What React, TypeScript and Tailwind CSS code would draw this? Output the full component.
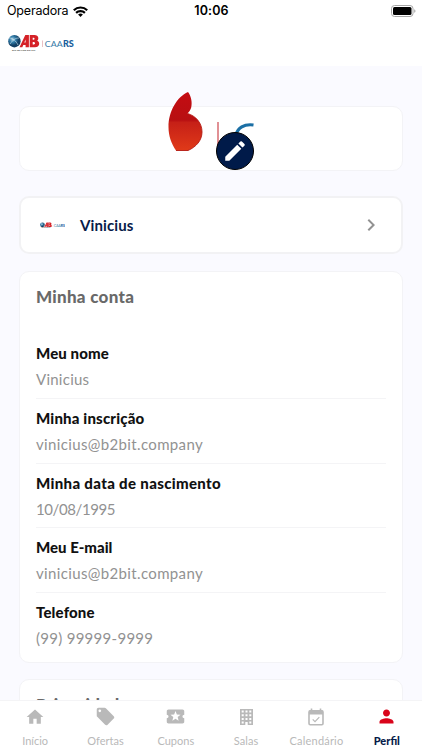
import type { ReactNode } from "react";
import {
  MdChevronRight,
  MdEdit,
  MdHome,
  MdLocalActivity,
  MdLocalOffer,
  MdPerson,
} from "react-icons/md";

function Logo({ className }: { className: string }) {
  return (
    <svg className={className} viewBox="0 0 66 18" aria-label="OAB CAARS">
      <defs>
        <radialGradient id="globe" cx="0.35" cy="0.35">
          <stop offset="0" stopColor="#a9cfe2" />
          <stop offset="0.5" stopColor="#2f7aa6" />
          <stop offset="1" stopColor="#123f63" />
        </radialGradient>
      </defs>
      <circle cx="6.4" cy="7.2" r="6.2" fill="url(#globe)" />
      <path d="M1 4c4 0 7 3 9 7M2 10c3-4 5-6 9-6" stroke="#d7e9f2" strokeWidth="0.6" fill="none" />
      <path fillRule="evenodd" d="M11.5 13.200 17.300 1h3.600v12.200h-3.300v-2.200h-2.300l-1 2.200zM16.300 8.600h1.300V5.500z" fill="#d52127" />
      <path
        fillRule="evenodd"
        d="M21.700 1h4.800c4.500 0 4.600 4.700 2.600 5.700 3.400 1.200 2.700 6.500-2.100 6.500h-5.300zM24.700 3.700v2h.9c1.300 0 1.300-2 0-2zM24.700 8.100v2.400h1.200c1.600 0 1.600-2.400 0-2.400z"
        fill="#d52127"
      />
      <text x="4" y="16.500" fontSize="2.600" fontWeight="700" textLength="23.500" lengthAdjust="spacingAndGlyphs" fill="#444" fontFamily="Lato, sans-serif">RIO GRANDE DO SUL</text>
      <path d="M34.500 6.500v6.500" stroke="#e2a5aa" strokeWidth="0.700" />
      <text x="36.800" y="12.800" fontSize="8.400" textLength="17.800" lengthAdjust="spacingAndGlyphs" fill="#397ba8" fontFamily="Lato, sans-serif">CAA</text>
      <text x="54.900" y="12.800" fontSize="8.400" fontWeight="900" textLength="10.900" lengthAdjust="spacingAndGlyphs" fill="#175d9c" fontFamily="Lato, sans-serif">RS</text>
    </svg>
  );
}

function StatusBar() {
  return (
    <div className="grid h-[22px] grid-cols-3 items-center pl-[7px] pr-[6px] font-[Inter,sans-serif] text-black">
      <div className="flex items-center gap-[5px]">
        <span className="text-[12.5px] leading-none tracking-[-0.2px]">Operadora</span>
        <svg className="h-[11px] w-[15px]" viewBox="0 0 15 11" fill="none" stroke="#000" strokeWidth="2.200">
          <path d="M.8 4.200a9.600 9.600 0 0 1 13.400 0M3.100 6.900a6.300 6.300 0 0 1 8.800 0" />
          <path d="M7.500 11 5.100 8.600a3.500 3.500 0 0 1 4.800 0z" fill="#000" stroke="none" />
        </svg>
      </div>
      <span className="text-center text-[12.5px] leading-none font-semibold tracking-[0.1px]">10:06</span>
      <svg className="h-[12px] w-[25px] justify-self-end" viewBox="0 0 25 12">
        <rect x=".5" y=".5" width="21.500" height="11" rx="3" fill="#fff" stroke="#a6a6a6" />
        <rect x="2" y="2" width="18.500" height="8" rx="1.500" />
        <path d="M23.300 4.200c1.500.5 1.500 3.100 0 3.600z" fill="#999" />
      </svg>
    </div>
  );
}

const fields = [
  { label: "Meu nome", value: "Vinicius", l: "tracking-[0.1px]", v: "tracking-[0.25px]" },
  { label: "Minha inscrição", value: "vinicius@b2bit.company", l: "tracking-[0.17px]", v: "tracking-[0.36px]" },
  { label: "Minha data de nascimento", value: "10/08/1995", l: "tracking-[0.34px]", v: "tracking-[-0.4px]" },
  { label: "Meu E-mail", value: "vinicius@b2bit.company", l: "tracking-[0px]", v: "tracking-[0.36px]" },
  { label: "Telefone", value: "(99) 99999-9999", l: "tracking-[0.15px]", v: "tracking-[0.28px]" },
];

function BuildingIcon() {
  return (
    <svg className="h-[16px] w-[13px]" viewBox="0 0 13 16">
      <path
        fill="#b9b9b9"
        fillRule="evenodd"
        d="M0 0h13v16H7.700v-3H5.300v3H0zM1.700 1.500v2h2v-2zM5.500 1.500v2h2v-2zM9.300 1.500v2h2v-2zM1.700 5.200v2h2v-2zM5.500 5.200v2h2v-2zM9.300 5.200v2h2v-2zM1.700 8.900v2h2v-2zM5.500 8.900v2h2v-2zM9.300 8.900v2h2v-2zM1.700 12.500v2h2v-2zM9.300 12.500v2h2v-2z"
      />
    </svg>
  );
}

function CalendarIcon() {
  return (
    <svg className="h-[18px] w-[16px]" viewBox="0 0 16 18" fill="none" stroke="#b9b9b9">
      <rect x="1" y="2.800" width="14" height="14" rx="1.200" strokeWidth="1.600" />
      <path d="M1 2.500h14v4H1z" fill="#b9b9b9" stroke="none" />
      <path d="M3.500.5v3M12.500.5v3" strokeWidth="1.600" />
      <path d="m4.700 11.400 2.300 2.200 4.300-4.500" strokeWidth="1.200" />
    </svg>
  );
}

function Tab({ icon, label, tracking, active }: { icon: ReactNode; label: string; tracking: string; active?: boolean }) {
  return (
    <div className={`flex flex-1 flex-col items-center ${active ? "text-[#d9041b]" : "text-[#b9b9b9]"}`}>
      <div className="mt-[5px] flex h-[21px] items-center">{icon}</div>
      <span className={`mt-[7px] text-[11px] leading-[14px] whitespace-nowrap ${tracking} ${active ? "font-black text-[#071b49]" : ""}`}>
        {label}
      </span>
    </div>
  );
}

export default function App() {
  return (
    <div className="flex h-[750px] w-[422px] flex-col overflow-hidden bg-[#fafaff] font-[Lato,sans-serif]">
      <header className="h-[66px] shrink-0 bg-white">
        <StatusBar />
        <div className="pt-[12px] pl-2">
          <Logo className="h-[18px] w-[66px]" />
        </div>
      </header>

      <main className="min-h-0 flex-1 overflow-hidden px-[19px] pt-[40px]">
        <section className="relative h-[65px] rounded-[10px] border border-[#f3f3f6] bg-white">
          <svg className="absolute -top-[16px] left-[147px] h-[64px] w-[90px]" viewBox="0 0 90 64">
            <defs>
              <linearGradient id="flame" x1="0" y1="0" x2="0" y2="1">
                <stop offset="0" stopColor="#c40c12" />
                <stop offset="0.48" stopColor="#b80f12" />
                <stop offset="0.52" stopColor="#c62017" />
                <stop offset="1" stopColor="#e03a19" />
              </linearGradient>
            </defs>
            <path
              d="M21 1C10 6 1.500 20 1.500 36c0 9 3 17 7.500 23.500h12C29 56 35 49.500 35 41c0-9-6-16-14.500-18.500 1.500-1.500 3-3.500 3.700-6C25.500 11 24 5 21 1z"
              fill="url(#flame)"
            />
            <path d="M9 59.500h12C29 56 35 49.500 35 41c0-9-6-16-14.500-18.500" fill="none" stroke="#b31912" strokeWidth="0.900" />
            <path d="M51 31v27" stroke="#dc7d82" strokeWidth="1.700" />
            <path d="M69 44c1.500-7 8-11.300 17.500-10" fill="none" stroke="#1b6fa5" strokeWidth="3.200" />
          </svg>
          <button className="absolute top-[25px] left-[196px] flex size-[38px] items-center justify-center rounded-full border border-black bg-[#001a49] text-white">
            <MdEdit className="size-[26px]" />
          </button>
        </section>

        <section className="mt-[25px] flex h-[58px] items-center rounded-[10px] border-2 border-[#f2f2f4] bg-white pr-[18px] pl-[19px]">
          <Logo className="h-[7px] w-[25px]" />
          <span className="ml-[15px] flex-1 text-[15px] font-bold tracking-[0.1px] text-[#071b49]">Vinicius</span>
          <MdChevronRight className="size-[24px] text-[#929292]" />
        </section>

        <section className="mt-[17px] h-[392px] rounded-[10px] border border-[#f3f3f6] bg-white px-[16px]">
          <h2 className="mt-[14px] text-[17px] leading-[22px] font-black tracking-[0.28px] text-[#696969]">Minha conta</h2>
          <div className="mt-[26px]">
            {fields.map((f, i) => (
              <div key={f.label} className={`h-[64.800px] border-[#f4f4f6] pt-[9px] ${i < 4 ? "border-b" : ""}`}>
                <div className={`text-[15px] leading-[20px] font-black whitespace-nowrap text-[#111] ${f.l}`}>{f.label}</div>
                <div className={`mt-[6px] text-[15px] leading-[20px] whitespace-nowrap text-[#929292] ${f.v}`}>{f.value}</div>
              </div>
            ))}
          </div>
        </section>

        <section className="mt-[16px] h-[200px] rounded-[10px] border border-[#f3f3f6] bg-white px-[16px]">
          <h2 className="mt-[14px] text-[17px] leading-[22px] font-black tracking-[0.4px] text-[#696969]">Privacidade</h2>
        </section>
      </main>

      <nav className="flex h-[50px] shrink-0 border-t border-[#f4f4f6] bg-white">
        <Tab icon={<MdHome className="size-[20px]" />} label="Início" tracking="tracking-[0px]" />
        <Tab icon={<MdLocalOffer className="size-[21px]" />} label="Ofertas" tracking="tracking-[0px]" />
        <Tab icon={<MdLocalActivity className="size-[21px]" />} label="Cupons" tracking="tracking-[0px]" />
        <Tab icon={<BuildingIcon />} label="Salas" tracking="tracking-[0.1px]" />
        <Tab icon={<CalendarIcon />} label="Calendário" tracking="tracking-[0.2px]" />
        <Tab icon={<MdPerson className="size-[21px]" />} label="Perfil" tracking="tracking-[0px]" active />
      </nav>
    </div>
  );
}
